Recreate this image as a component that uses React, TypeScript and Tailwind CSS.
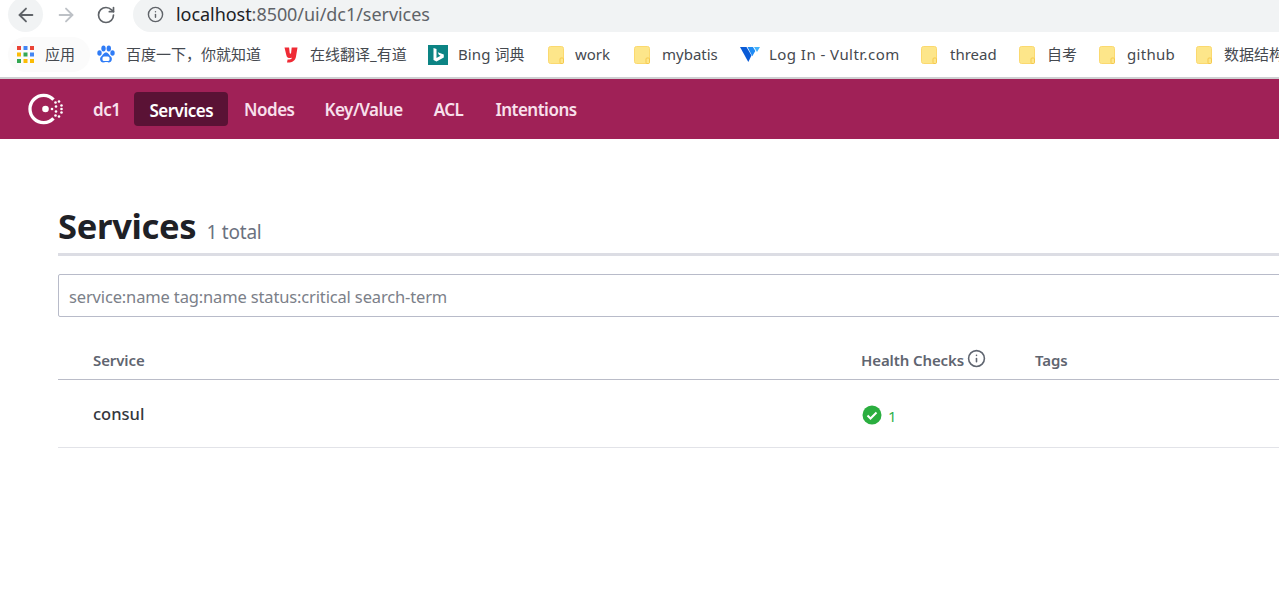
import { ArrowLeft, ArrowRight, RotateCw, Info } from "lucide-react";

function Folder() {
  return (
    <svg width="16" height="18" viewBox="0 0 16 18" className="shrink-0">
      <rect x="0.5" y="0.5" width="15" height="17" rx="2" fill="#fde68a" stroke="#fbd96f" />
      <rect x="12" y="12" width="3.5" height="5.5" rx="1" fill="#fde68a" stroke="#f5c94e" />
    </svg>
  );
}

function Bookmark({ icon, label, w, gap, extra }: { icon: React.ReactNode; label: string; w: string; gap: string; extra?: string }) {
  return (
    <div className={`flex items-center shrink-0 ${w}`}>
      {icon}
      <span className={`whitespace-nowrap ${gap} ${extra ?? ""}`}>{label}</span>
    </div>
  );
}

function AppsIcon() {
  const c = ["#ea4335", "#4285f4", "#ea4335", "#fbbc05", "#34a853", "#4285f4", "#34a853", "#fbbc05", "#fbbc05"];
  return (
    <svg width="17" height="17" viewBox="0 0 17 17" className="shrink-0">
      {c.map((f, i) => (
        <rect key={i} x={(i % 3) * 6.5} y={Math.floor(i / 3) * 6.5} width="4" height="4" fill={f} />
      ))}
    </svg>
  );
}

function Paw() {
  return (
    <svg width="18" height="19" viewBox="0 0 18 19" className="shrink-0">
      <g fill="#2f7cf6">
        <ellipse cx="2.5" cy="8" rx="2.2" ry="2.8" />
        <ellipse cx="6.5" cy="3.5" rx="2.2" ry="2.9" />
        <ellipse cx="11.8" cy="3.5" rx="2.2" ry="2.9" />
        <ellipse cx="15.5" cy="8" rx="2.2" ry="2.8" />
        <path d="M9 7.5c2.5 0 3 2.6 4.8 4 2 1.6 1.2 6-2 6-1.2 0-1.8-.4-2.8-.4s-1.6.4-2.8.4c-3.2 0-4-4.4-2-6C6 10.1 6.5 7.5 9 7.5z" />
      </g>
      <rect x="5.5" y="11.5" width="7" height="4.5" rx="1.5" fill="#fff" />
    </svg>
  );
}

function Youdao() {
  return (
    <svg width="14" height="16" viewBox="0 0 14 16" className="shrink-0">
      <path d="M0.5 0.5h4.6l.6 5.5c.1 1 1.2 1 1.4 0l.6-5.5h5.8l-1.5 9c-.7 4-3.5 6-8 6h-1l.6-3h1.5c1.8 0 2.6-.7 3-2-1.8 1.2-5.3.8-5.8-2.5z" fill="#ef2b35" />
    </svg>
  );
}

function BingIcon() {
  return (
    <svg width="20" height="20" viewBox="0 0 20 20" className="shrink-0">
      <rect width="20" height="20" fill="#0c8484" />
      <path d="M5.5 3l3 1v9l4-2.3-1.7-.9-1-2.5 6 2.1v3l-7.3 4.2-3-1.6z" fill="#fff" />
    </svg>
  );
}

function Vultr() {
  return (
    <svg width="20" height="17" viewBox="0 0 20 17" className="shrink-0">
      <path d="M0 1h6.5l5 8.5-3.2 6.500z" fill="#0a5bd6" />
      <path d="M7.5 1h5.500l2.300 4-3 5.200z" fill="#1e8bf5" />
      <path d="M14 1h6l-3 5z" fill="#45b3fb" />
    </svg>
  );
}

function ConsulLogo() {
  return (
    <svg width="36" height="36" viewBox="0 0 36 36" className="shrink-0">
      <path d="M25.5 8.7 A13.6 13.6 0 1 0 25.5 27.3" fill="none" stroke="#fff" strokeWidth="3.3" strokeLinecap="butt" />
      <circle cx="17.5" cy="18" r="3.3" fill="#fff" />
      {[[24, 18], [27.5, 11.5], [31, 10.5], [33.5, 14.5], [28, 15.5], [33.5, 18], [28, 20.5], [33.5, 21.5], [31, 25.5], [27.5, 24.5]].map(([x, y], i) => (
        <circle key={i} cx={x} cy={y} r="1.3" fill="#fff" />
      ))}
    </svg>
  );
}

export default function App() {
  return (
    <div className="w-[1279px] h-[593px] overflow-hidden bg-white font-['Noto_Sans','Noto_Sans_CJK_SC',sans-serif]">
      <div className="h-[32px] flex items-center pl-[8px] gap-[5px]">
        <div className="w-[35px] h-[35px] rounded-full bg-[#f1f3f4] flex items-center justify-center -mt-[3px] shrink-0">
          <ArrowLeft size={22} strokeWidth={2} className="text-[#5f6368]" />
        </div>
        <div className="w-[35px] flex justify-center shrink-0 -mt-[3px]">
          <ArrowRight size={22} strokeWidth={2} className="text-[#bdc1c6]" />
        </div>
        <div className="w-[30px] flex justify-center shrink-0 -mt-[3px] pl-[6px]">
          <RotateCw size={20} strokeWidth={2} className="text-[#5f6368]" />
        </div>
        <div className="flex-1 h-[35px] -mt-[3px] ml-[10px] rounded-l-full bg-[#f1f3f4] flex items-center pl-[14px]">
          <Info size={17} strokeWidth={2} className="text-[#5f6368] shrink-0" />
          <span className="ml-[12px] text-[18px] tracking-[-0.05px] text-[#5f6368]">
            <span className="text-[#202124]">localhost</span>:8500/ui/dc1/services
          </span>
        </div>
      </div>
      <div className="h-[45px] flex items-center text-[15px] text-[#45494f]">
        <div className="w-[82px] ml-[8px] h-[35px] rounded-full bg-[#fbfbfb] flex items-center pl-[9px] shrink-0">
          <AppsIcon />
          <span className="ml-[11px]">应用</span>
        </div>
        <div className="w-[7px] shrink-0" />
        <Bookmark w="w-[187px]" gap="ml-[11px]" icon={<Paw />} label="百度一下，你就知道" />
        <Bookmark w="w-[144px]" gap="ml-[12px]" icon={<Youdao />} label="在线翻译_有道" />
        <Bookmark w="w-[120px]" gap="ml-[10px]" extra="tracking-[0.1px]" icon={<BingIcon />} label="Bing 词典" />
        <Bookmark w="w-[86px]" gap="ml-[11px]" icon={<Folder />} label="work" />
        <Bookmark w="w-[106px]" gap="ml-[12px]" icon={<Folder />} label="mybatis" />
        <Bookmark w="w-[181px]" gap="ml-[9px]" extra="tracking-[0.45px]" icon={<Vultr />} label="Log In - Vultr.com" />
        <Bookmark w="w-[98px]" gap="ml-[13px]" icon={<Folder />} label="thread" />
        <Bookmark w="w-[80px]" gap="ml-[12px]" icon={<Folder />} label="自考" />
        <Bookmark w="w-[97px]" gap="ml-[12px]" extra="tracking-[0.3px]" icon={<Folder />} label="github" />
        <Bookmark w="w-[120px]" gap="ml-[12px]" icon={<Folder />} label="数据结构" />
      </div>
      <div className="h-[2px] bg-[#cfd0d2]" />
      <nav className="h-[60px] bg-[#a02157] flex items-center pl-[28px] text-[17px] font-semibold tracking-[-0.5px] text-[#f8e0ec]">
        <ConsulLogo />
        <span className="ml-[29px] mt-[2px]">dc1</span>
        <span className="ml-[14px] px-[15px] h-[34px] leading-[37px] rounded-[4px] bg-[#5a1235] text-white">Services</span>
        <span className="ml-[16px] mt-[2px]">Nodes</span>
        <span className="ml-[30px] mt-[2px]">Key/Value</span>
        <span className="ml-[31px] mt-[2px]">ACL</span>
        <span className="ml-[32px] mt-[2px]">Intentions</span>
      </nav>
      <main className="pl-[58px] w-[1400px]">
        <div className="pt-[62px] h-[117px] border-b-[3px] border-[#dcdde4] box-border flex items-baseline">
          <h1 className="text-[34.5px] leading-[50px] font-bold text-[#1f2126] tracking-[-0.3px]">Services</h1>
          <span className="ml-[10px] text-[19px] text-[#6b7280] tracking-[-0.2px]">1 total</span>
        </div>
        <div className="mt-[18px] h-[43px] border border-[#b8bbc9] rounded-[2px] flex items-center pl-[10px] pt-[3px] text-[16.5px] tracking-[-0.15px] text-[#7b8089]">
          service:name tag:name status:critical search-term
        </div>
        <div className="h-[63px] border-b border-[#babcc8] flex items-end pb-[8px] text-[15px] font-semibold text-[#5f6570] tracking-[-0.1px]">
          <span className="ml-[35px] w-[768px]">Service</span>
          <span className="flex items-center w-[174px]">
            Health Checks
            <Info size={19} strokeWidth={2} className="ml-[3px] -mt-[2px] text-[#5f6570]" />
          </span>
          <span>Tags</span>
        </div>
        <div className="h-[68px] border-b border-[#e2e3e8] flex items-center">
          <span className="ml-[35px] w-[769px] text-[16.5px] font-medium text-[#34373d] mt-[2px]">consul</span>
          <span className="flex items-center mt-[2px]">
            <svg width="20" height="20" viewBox="0 0 20 20">
              <circle cx="10" cy="10" r="9.5" fill="#2aae3f" />
              <path d="M5.5 10.5l3 3 6-6" fill="none" stroke="#fff" strokeWidth="2" />
            </svg>
            <span className="ml-[6px] mt-[3px] text-[15px] text-[#2eb14a]">1</span>
          </span>
        </div>
      </main>
    </div>
  );
}
